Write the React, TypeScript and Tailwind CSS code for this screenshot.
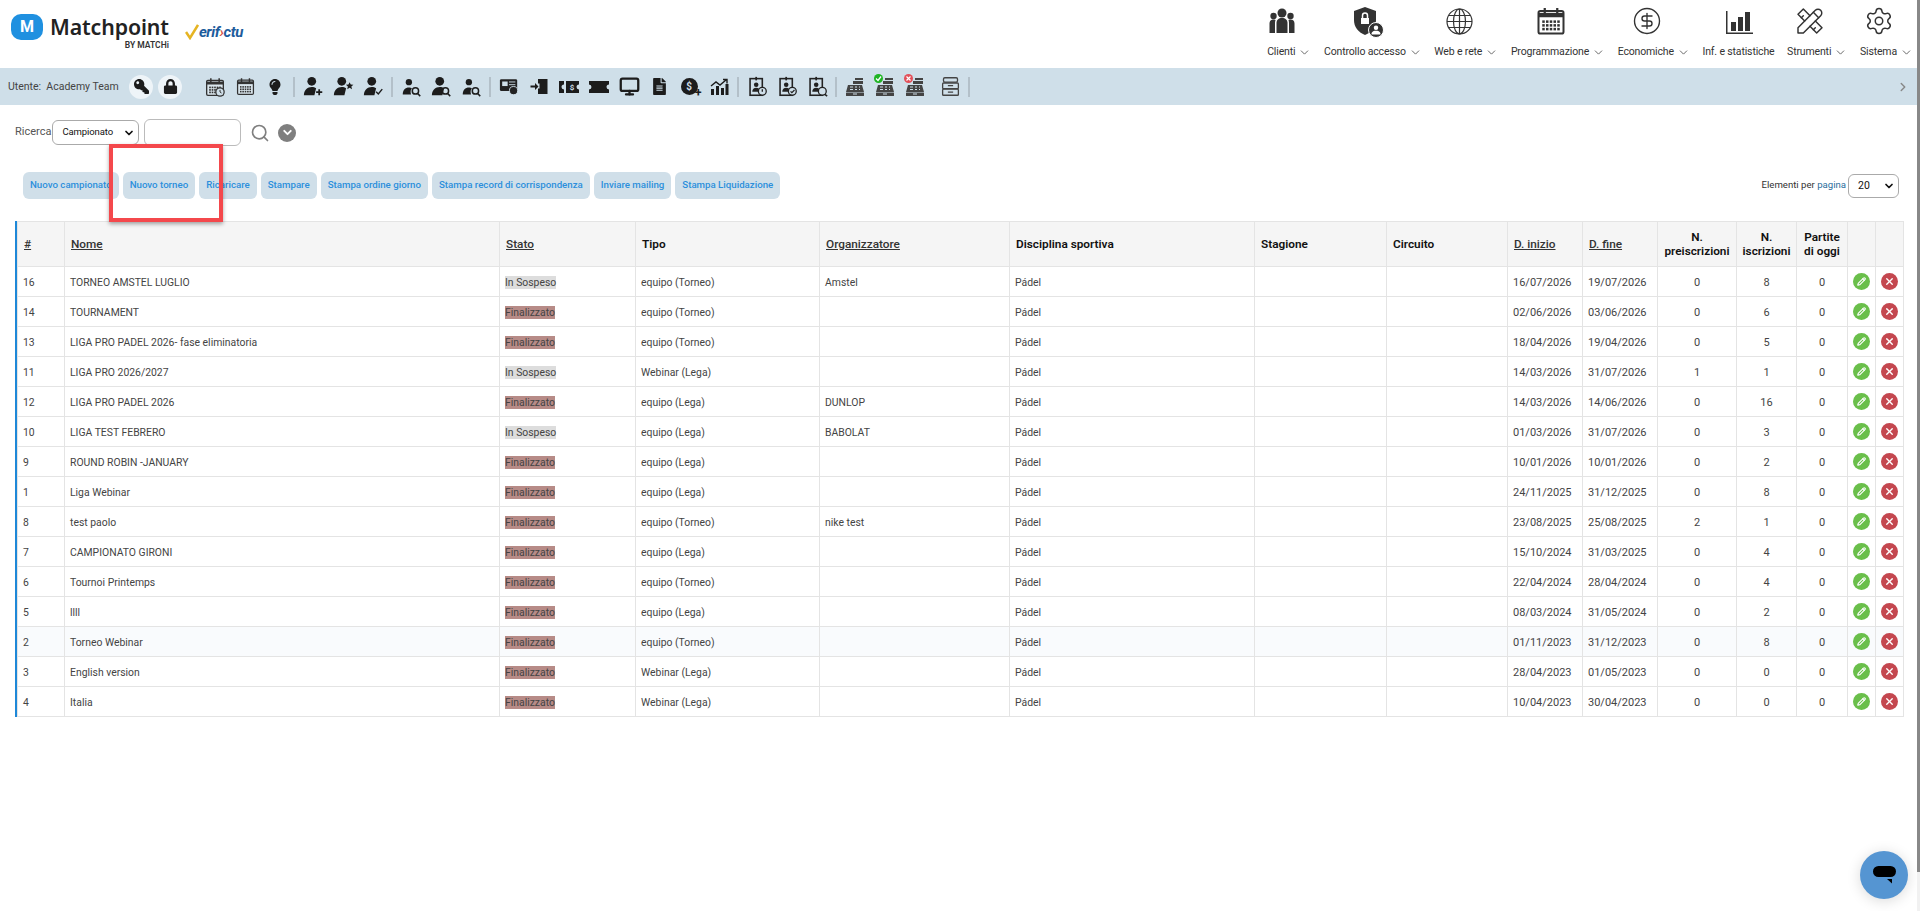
import { ChevronDown, ChevronRight, CircleDollarSign, Search, Settings, Pencil, X, Monitor } from "lucide-react";
import { FaFileAlt, FaKey, FaLightbulb, FaLock } from "react-icons/fa";
import { BsPersonFill } from "react-icons/bs";
import { TbTools } from "react-icons/tb";

const rows = [
  ["16", "TORNEO AMSTEL LUGLIO", "In Sospeso", "equipo (Torneo)", "Amstel", "16/07/2026", "19/07/2026", "0", "8"],
  ["14", "TOURNAMENT", "Finalizzato", "equipo (Torneo)", "", "02/06/2026", "03/06/2026", "0", "6"],
  ["13", "LIGA PRO PADEL 2026- fase eliminatoria", "Finalizzato", "equipo (Torneo)", "", "18/04/2026", "19/04/2026", "0", "5"],
  ["11", "LIGA PRO 2026/2027", "In Sospeso", "Webinar (Lega)", "", "14/03/2026", "31/07/2026", "1", "1"],
  ["12", "LIGA PRO PADEL 2026", "Finalizzato", "equipo (Lega)", "DUNLOP", "14/03/2026", "14/06/2026", "0", "16"],
  ["10", "LIGA TEST FEBRERO", "In Sospeso", "equipo (Lega)", "BABOLAT", "01/03/2026", "31/07/2026", "0", "3"],
  ["9", "ROUND ROBIN -JANUARY", "Finalizzato", "equipo (Lega)", "", "10/01/2026", "10/01/2026", "0", "2"],
  ["1", "Liga Webinar", "Finalizzato", "equipo (Lega)", "", "24/11/2025", "31/12/2025", "0", "8"],
  ["8", "test paolo", "Finalizzato", "equipo (Torneo)", "nike test", "23/08/2025", "25/08/2025", "2", "1"],
  ["7", "CAMPIONATO GIRONI", "Finalizzato", "equipo (Lega)", "", "15/10/2024", "31/03/2025", "0", "4"],
  ["6", "Tournoi Printemps", "Finalizzato", "equipo (Torneo)", "", "22/04/2024", "28/04/2024", "0", "4"],
  ["5", "llll", "Finalizzato", "equipo (Lega)", "", "08/03/2024", "31/05/2024", "0", "2"],
  ["2", "Torneo Webinar", "Finalizzato", "equipo (Torneo)", "", "01/11/2023", "31/12/2023", "0", "8"],
  ["3", "English version", "Finalizzato", "Webinar (Lega)", "", "28/04/2023", "01/05/2023", "0", "0"],
  ["4", "Italia", "Finalizzato", "Webinar (Lega)", "", "10/04/2023", "30/04/2023", "0", "0"],
];

const buttons = [
  "Nuovo campionato",
  "Nuovo torneo",
  "Ricaricare",
  "Stampare",
  "Stampa ordine giorno",
  "Stampa record di corrispondenza",
  "Inviare mailing",
  "Stampa Liquidazione",
];

const colWidths = [47, 435, 136, 184, 190, 245, 132, 121, 75, 75, 79, 60, 51, 28, 28];

function CalendarIcon({ size = 20, clock = false }: { size?: number; clock?: boolean }) {
  return (
    <svg width={size} height={size} viewBox="0 0 24 24" fill="none">
      <rect x="2" y="4" width="20" height="18" rx="1.500" stroke="#333" strokeWidth="1.600" fill="#fff" fillOpacity="0.25" />
      <path d="M2 5.500h20V9H2z" fill="#333" />
      <path d="M7 1.500v5M17 1.500v5" stroke="#333" strokeWidth="1.800" />
      {[11.5, 14.5, 17.5].map((y) =>
        [5, 8, 11, 14, 17].map((x) => <rect key={`${x}-${y}`} x={x} y={y} width="2" height="2" fill="#333" />),
      )}
      {clock && (
        <g>
          <circle cx="18" cy="18" r="5" fill="#cfdfe9" stroke="#333" strokeWidth="1.500" />
          <path d="M18 15.500V18l1.800 1.200" stroke="#333" strokeWidth="1.200" />
        </g>
      )}
    </svg>
  );
}

function PersonIcon({ badge, small = false }: { badge: "plus" | "star" | "check" | "search"; small?: boolean }) {
  return (
    <svg width="21" height="21" viewBox="0 0 24 24" fill="#1c1c1c">
      {small ? (
        <g>
          <circle cx="9" cy="7" r="3.600" />
          <path d="M2 21c0-5 3-8 7-8 1.500 0 2.500.3 3.500 1-1.500 1.500-2 4-1 7z" />
        </g>
      ) : (
        <g>
          <circle cx="10" cy="6" r="5" />
          <path d="M1 22c0-6 4-9.500 9-9.500 2 0 3.500.5 5 1.500L13 22z" />
        </g>
      )}
      {badge === "plus" && <path d="M18.500 15v7M15 18.500h7" stroke="#1c1c1c" strokeWidth="2" />}
      {badge === "star" && <path d="m19 7 1.300 2.800 3 .3-2.300 2 .7 3-2.700-1.600-2.700 1.600.7-3-2.300-2 3-.3z" />}
      {badge === "check" && <path d="m15 18 2.500 2.500L22 15" stroke="#1c1c1c" strokeWidth="1.600" fill="none" />}
      {badge === "search" && (
        <g fill="none" stroke="#1c1c1c" strokeWidth="1.700">
          <circle cx="16.500" cy="17" r="3.600" />
          <path d="m19 20 3 3" />
        </g>
      )}
    </svg>
  );
}

function BadgeDocIcon({ kind }: { kind: "clock" | "check" | "search" }) {
  return (
    <svg width="21" height="21" viewBox="0 0 24 24" fill="none">
      <rect x="3.500" y="3" width="14" height="19" stroke="#222" strokeWidth="1.800" />
      <path d="M10.500 1v4" stroke="#222" strokeWidth="2" />
      <circle cx="10.500" cy="10" r="2.600" fill="#222" />
      <path d="M6 18c0-3 2-4.500 4.500-4.500S15 15 15 18z" fill="#222" />
      <circle cx="17.500" cy="17.500" r="4.500" fill="#cfdfe9" stroke="#222" strokeWidth="1.500" />
      {kind === "clock" && <path d="M17.500 15v3" stroke="#222" strokeWidth="1.500" />}
      {kind === "check" && <path d="m15.500 17.500 1.500 1.500 3-3" stroke="#222" strokeWidth="1.400" />}
      {kind === "search" && <path d="m20.500 21 2.500 2" stroke="#222" strokeWidth="1.800" />}
    </svg>
  );
}

function DrawerIcon() {
  return (
    <svg width="21" height="21" viewBox="0 0 24 24" fill="none" stroke="#444" strokeWidth="1.500">
      <rect x="4" y="2" width="16" height="5" rx="1.500" />
      <rect x="3" y="8" width="18" height="6.500" rx="1" />
      <rect x="3" y="15" width="18" height="7" rx="1" />
      <path d="M9 11h6M9 18.500h6" />
    </svg>
  );
}

function Register({ status }: { status?: "ok" | "ko" }) {
  return (
    <span className="relative flex">
      <svg width="20" height="20" viewBox="0 0 20 20" fill="#444">
        <rect x="10" y="1" width="8" height="2" />
        <rect x="8" y="4" width="10" height="3" />
        <path d="M3 8h14l2 7H1z" />
        <path d="M5 10h3M10 10h2M14 10h1M5 12.500h3M10 12.500h2M14 12.500h1" stroke="#cfdfe9" />
        <rect x="1" y="15.500" width="18" height="3.500" rx="0.500" />
        <rect x="8" y="16.500" width="4" height="1" fill="#cfdfe9" />
      </svg>
      {status === "ok" && (
        <span className="absolute -left-[1px] -top-[3px] flex h-[9px] w-[9px] items-center justify-center rounded-full bg-[#1fb424]">
          <svg width="7" height="7" viewBox="0 0 7 7" fill="none">
            <path d="m1 3.500 2 2 3-4" stroke="#fff" strokeWidth="1.300" />
          </svg>
        </span>
      )}
      {status === "ko" && (
        <span className="absolute -left-[1px] -top-[3px] flex h-[9px] w-[9px] items-center justify-center rounded-full bg-[#e2505a]">
          <svg width="7" height="7" viewBox="0 0 7 7" fill="none">
            <path d="m1.500 1.500 4 4m0-4-4 4" stroke="#fff" strokeWidth="1.200" />
          </svg>
        </span>
      )}
    </span>
  );
}

function Sep() {
  return <span className="mx-[3px] h-[20px] w-[2px] bg-[#b3c0c9]" />;
}

function Slot({ children }: { children: React.ReactNode }) {
  return <span className="flex h-[24px] w-[30px] items-center justify-center">{children}</span>;
}

function NavItem({ label, icon, arrow = true }: { label: string; icon: React.ReactNode; arrow?: boolean }) {
  return (
    <div className="flex flex-col items-center">
      <div className={`flex h-[36px] items-center justify-center ${arrow ? "pr-[14px]" : ""}`}>{icon}</div>
      <div className="mt-[6px] flex items-center gap-[3px] text-[10.500px] leading-[14px] tracking-[-0.15px] text-[#333]">
        {label}
        {arrow && <ChevronDown size={13} strokeWidth={1.800} color="#666" />}
      </div>
    </div>
  );
}

function Logo() {
  return (
    <div className="flex items-start pl-[11px] pt-[14px]">
      <div className="flex h-[26px] w-[32px] items-center justify-center rounded-[10px] bg-[#1f90e0] text-[16px] font-bold text-white">M</div>
      <div className="ml-[7px] flex flex-col items-end">
        <span className="text-[21.300px] font-semibold leading-[26px] tracking-[-0.1px] text-[#222] [font-family:'Noto_Sans',sans-serif]">Matchpoint</span>
        <span className="text-[8.500px] font-semibold leading-[10px] text-[#333]">BY MATCHi</span>
      </div>
      <div className="ml-[16px] mt-[10px] flex items-center text-[15px] font-bold italic leading-[16px] tracking-[-0.4px] text-[#1d5c9c]">
        <svg width="14" height="16" viewBox="0 0 14 16" fill="none">
          <path d="M1 8l4 6 8-13" stroke="#e6b422" strokeWidth="2.500" />
        </svg>
        erif
        <span className="text-[#d9503f]">›</span>
        ctu
      </div>
    </div>
  );
}

function Th({ children, link = false, center = false }: { children?: React.ReactNode; link?: boolean; center?: boolean }) {
  return (
    <th className={`border border-[#e4e4e4] bg-[#f5f5f5] text-[11.800px] leading-[14px] ${center ? "px-[1px] text-center" : "px-[6px] text-left"} ${link ? "font-medium text-[#333] underline" : "font-semibold text-[#111]"}`}>
      {children}
    </th>
  );
}

function Td({ children, center = false, digits = false }: { children?: React.ReactNode; center?: boolean; digits?: boolean }) {
  return (
    <td className={`h-[30px] overflow-hidden whitespace-nowrap border border-[#e4e4e4] px-[5px] pt-[3px] text-[#444] ${digits ? "text-[11px]" : "text-[10.400px]"} ${center ? "text-center" : ""}`}>
      {children}
    </td>
  );
}

export default function App() {
  return (
    <div className="relative h-[911px] overflow-hidden bg-white [font-family:Roboto,sans-serif]">
      <header className="flex h-[68px] justify-between">
        <Logo />
        <nav className="flex items-start gap-[12.600px] pr-[7px] pt-[3px]">
          <NavItem
            label="Clienti"
            icon={
              <svg width="28" height="28" viewBox="0 0 28 28" fill="#333">
                <circle cx="14" cy="6" r="4.500" />
                <circle cx="5.500" cy="9" r="3.200" />
                <circle cx="22.500" cy="9" r="3.200" />
                <path d="M8.500 26V16c0-3 2-5 5.500-5s5.500 2 5.500 5v10z" />
                <path d="M7 26H1.500v-9.500c0-2.500 1.500-4 4-4 .8 0 1.500.1 2 .4C7.200 14 7 15 7 16zM21 26h5.500v-9.500c0-2.500-1.500-4-4-4-.8 0-1.500.1-2 .4.300 1.100.5 2.100.5 3.100z" />
              </svg>
            }
          />
          <NavItem
            label="Controllo accesso"
            icon={
              <span className="relative flex">
                <svg width="26" height="30" viewBox="0 0 26 30" fill="#333">
                  <path d="M12 1 23 5v9c0 7-4 12-11 15C5 26 1 21 1 14V5z" />
                  <rect x="8" y="12" width="8" height="6" fill="#fff" />
                  <path d="M9.500 12V9.500a2.500 2.500 0 0 1 5 0V12" stroke="#fff" strokeWidth="1.500" fill="none" />
                </svg>
                <span className="absolute -bottom-[2px] -right-[5px] flex h-[16px] w-[16px] items-center justify-center rounded-full border border-white bg-[#333]">
                  <BsPersonFill size={12} color="#fff" />
                </span>
              </span>
            }
          />
          <NavItem
            label="Web e rete"
            icon={
              <svg width="27" height="27" viewBox="0 0 27 27" fill="none" stroke="#333" strokeWidth="1.200">
                <circle cx="13.500" cy="13.500" r="12.500" />
                <ellipse cx="13.500" cy="13.500" rx="6" ry="12.500" />
                <path d="M13.500 1v25M1 13.500h25M3 7.500h21M3 19.500h21" />
              </svg>
            }
          />
          <NavItem label="Programmazione" icon={<CalendarIcon size={30} />} />
          <NavItem label="Economiche" icon={<CircleDollarSign size={30} strokeWidth={1.100} color="#333" />} />
          <NavItem
            label="Inf. e statistiche"
            arrow={false}
            icon={
              <svg width="28" height="28" viewBox="0 0 28 28" fill="#333">
                <path d="M1 4v23h27v-1.500H2.500V4z" />
                <rect x="6" y="15" width="5" height="9" />
                <rect x="13" y="10" width="5" height="14" />
                <rect x="20" y="5" width="5" height="19" />
              </svg>
            }
          />
          <NavItem label="Strumenti" icon={<TbTools size={32} strokeWidth={1.100} color="#333" />} />
          <NavItem label="Sistema" icon={<Settings size={30} strokeWidth={1.200} color="#333" />} />
        </nav>
      </header>

      <div className="flex h-[37px] items-center bg-[#cfdfe9] pl-[8px] pr-[10px]">
        <span className="w-[121px] whitespace-nowrap text-[10.500px] text-[#444]">
          Utente:&nbsp; Academy Team
        </span>
        <span className="flex h-[24px] w-[24px] items-center justify-center rounded-full bg-[#eef4f8]">
          <FaKey size={15} color="#1c1c1c" className="-scale-x-100" />
        </span>
        <span className="ml-[5px] flex h-[24px] w-[24px] items-center justify-center rounded-full bg-[#eef4f8]">
          <FaLock size={15} color="#1c1c1c" />
        </span>
        <span className="ml-[18px] flex items-center">
          <Slot><CalendarIcon clock /></Slot>
          <Slot><CalendarIcon size={19} /></Slot>
          <Slot><FaLightbulb size={16} color="#1c1c1c" /></Slot>
          <Sep />
          <Slot><PersonIcon badge="plus" /></Slot>
          <Slot><PersonIcon badge="star" /></Slot>
          <Slot><PersonIcon badge="check" /></Slot>
          <Sep />
          <Slot><PersonIcon badge="search" small /></Slot>
          <Slot><PersonIcon badge="search" /></Slot>
          <Slot><PersonIcon badge="search" small /></Slot>
          <Sep />
          <Slot>
            <svg width="20" height="19" viewBox="0 0 22 20" fill="#222">
              <rect x="1" y="2" width="19" height="13" rx="1.500" />
              <rect x="3.500" y="4.500" width="6" height="5" fill="#cfdfe9" />
              <path d="M11 5h7M11 8h7" stroke="#cfdfe9" />
              <circle cx="16" cy="14.500" r="4.500" stroke="#cfdfe9" />
            </svg>
          </Slot>
          <Slot>
            <svg width="19" height="19" viewBox="0 0 19 19" fill="#1c1c1c">
              <path d="M8 2h9.500v15H8v-5.500h1.500V9.500v-3H8z" />
              <path d="M0.500 8.500h4.500V6l3.500 3.500L5 13v-2.500H.5z" />
            </svg>
          </Slot>
          <Slot>
            <svg width="20" height="14" viewBox="0 0 20 14" fill="#1c1c1c">
              <path d="M0 1h5v3.500a2.500 2.500 0 0 0 0 5V13H0zM7 1h13v3.500a2.500 2.500 0 0 0 0 5V13H7z" />
              <text x="13" y="10" fontSize="8" fontWeight="700" fill="#cfdfe9" textAnchor="middle">$</text>
            </svg>
          </Slot>
          <Slot>
            <svg width="20" height="14" viewBox="0 0 20 14" fill="#1c1c1c">
              <path d="M0 1h20v3.500a2.500 2.500 0 0 0 0 5V13H0v-3.500a2.500 2.500 0 0 0 0-5z" />
            </svg>
          </Slot>
          <Slot><Monitor size={21} strokeWidth={2.600} color="#1c1c1c" /></Slot>
          <Slot><FaFileAlt size={17} color="#1c1c1c" /></Slot>
          <Slot>
            <span className="relative flex h-[17px] w-[17px] items-center justify-center rounded-full bg-[#1c1c1c] text-[10px] font-bold text-[#cfdfe9]">
              $
              <span className="absolute -bottom-[3px] -right-[4px] text-[12px] font-bold leading-[10px] text-[#1c1c1c]">+</span>
            </span>
          </Slot>
          <Slot>
            <svg width="19" height="17" viewBox="0 0 19 17" fill="#1c1c1c">
              <rect x="1" y="11" width="3" height="6" />
              <rect x="6" y="8" width="3" height="9" />
              <rect x="11" y="10" width="3" height="7" />
              <rect x="15.500" y="6" width="3" height="11" />
              <path d="M1 8l5-4 4 3 6-5M13 1.500h4v4" stroke="#1c1c1c" strokeWidth="1.400" fill="none" />
            </svg>
          </Slot>
          <Sep />
          <Slot><BadgeDocIcon kind="clock" /></Slot>
          <Slot><BadgeDocIcon kind="check" /></Slot>
          <Slot><BadgeDocIcon kind="search" /></Slot>
          <Sep />
          <Slot><Register /></Slot>
          <Slot><Register status="ok" /></Slot>
          <Slot><Register status="ko" /></Slot>
          <span className="ml-[5px] flex w-[30px] justify-center"><DrawerIcon /></span>
          <Sep />
        </span>
        <ChevronRight size={14} strokeWidth={2.500} color="#888" className="ml-auto" />
      </div>

      <div className="mt-[14px] flex h-[27px] items-center pl-[15px]">
        <span className="text-[11px] text-[#555]">Ricerca</span>
        <div className="ml-[1px] flex h-[25px] w-[87px] items-center justify-between rounded-[6px] border border-[#aaa] pl-[9px] pr-[3px] text-[9.500px] tracking-[-0.1px] text-[#111]">
          Campionato
          <ChevronDown size={12} strokeWidth={3.500} color="#111" />
        </div>
        <div className="ml-[5px] h-[27px] w-[97px] rounded-[6px] border border-[#bbb]" />
        <Search size={20} strokeWidth={2} color="#7f7f7f" className="ml-[9px]" />
        <span className="ml-[8px] flex h-[18px] w-[18px] items-center justify-center rounded-full bg-[#7f7f7f]">
          <ChevronDown size={13} strokeWidth={3.500} color="#fff" />
        </span>
      </div>

      <div className="mt-[26px] flex h-[27px] items-center justify-between pl-[23px] pr-[21px]">
        <div className="flex gap-[4px]">
          {buttons.map((b) => (
            <span key={b} className="flex h-[27px] items-center rounded-[6px] bg-[#d0dfe9] px-[7px] text-[9.700px] font-medium text-[#2c8fdc]">
              {b}
            </span>
          ))}
        </div>
        <div className="flex items-center gap-[2px]">
          <span className="text-[9.600px] text-[#333]">
            Elementi per <span className="text-[#2a6d9c]">pagina</span>
          </span>
          <div className="flex h-[24px] w-[51px] items-center justify-between rounded-[6px] border border-[#aaa] pl-[9px] pr-[3px] text-[10.500px] text-[#111]">
            20
            <ChevronDown size={12} strokeWidth={3.500} color="#111" />
          </div>
        </div>
      </div>

      <div className="ml-[15px] mt-[22px] w-[1888px] border-l-[2px] border-[#1e88d8]">
        <table className="table-fixed border-collapse" style={{ width: colWidths.reduce((a, b) => a + b, 0) }}>
          <colgroup>
            {colWidths.map((w, i) => (
              <col key={i} style={{ width: w }} />
            ))}
          </colgroup>
          <thead>
            <tr className="h-[45px]">
              <Th link>#</Th>
              <Th link>Nome</Th>
              <Th link>Stato</Th>
              <Th>Tipo</Th>
              <Th link>Organizzatore</Th>
              <Th>Disciplina sportiva</Th>
              <Th>Stagione</Th>
              <Th>Circuito</Th>
              <Th link>D. inizio</Th>
              <Th link>D. fine</Th>
              <Th center>N. preiscrizioni</Th>
              <Th center>N. iscrizioni</Th>
              <Th center>Partite di oggi</Th>
              <Th />
              <Th />
            </tr>
          </thead>
          <tbody>
            {rows.map((r) => (
              <tr key={r[0]} className={r[0] === "2" ? "bg-[#f9fbfd]" : ""}>
                <Td>{r[0]}</Td>
                <Td>{r[1]}</Td>
                <Td>
                  <span className={r[2] === "Finalizzato" ? "bg-[#b78b87]" : "bg-[#dddddd]"}>{r[2]}</span>
                </Td>
                <Td>{r[3]}</Td>
                <Td>{r[4]}</Td>
                <Td>Pádel</Td>
                <Td />
                <Td />
                <Td digits>{r[5]}</Td>
                <Td digits>{r[6]}</Td>
                <Td center digits>{r[7]}</Td>
                <Td center digits>{r[8]}</Td>
                <Td center digits>0</Td>
                <td className="border border-[#e4e4e4]">
                  <span className="mx-auto flex h-[17px] w-[17px] items-center justify-center rounded-full bg-[#6abf4b]">
                    <Pencil size={9} strokeWidth={3} color="#fff" />
                  </span>
                </td>
                <td className="border border-[#e4e4e4]">
                  <span className="mx-auto flex h-[17px] w-[17px] items-center justify-center rounded-full bg-[#c4474f]">
                    <X size={11} strokeWidth={3} color="#fff" />
                  </span>
                </td>
              </tr>
            ))}
          </tbody>
        </table>
      </div>

      <div className="absolute left-[109px] top-[144px] h-[78px] w-[114px] border-[4px] border-[#f4484c] shadow-[0_2px_4px_rgba(0,0,0,0.35)]" />

      <div className="absolute bottom-[12px] right-[12px] flex h-[48px] w-[48px] items-center justify-center rounded-full bg-[#5595d2] shadow-[0_2px_14px_rgba(0,0,0,0.15)]">
        <svg width="24" height="20" viewBox="0 0 24 20" fill="#000">
          <rect x="1" y="1" width="23" height="11" rx="5.500" />
          <path d="M15 14l5 0v4.500z" />
        </svg>
      </div>

      <div className="absolute right-0 top-0 h-full w-[3px] bg-[#f1f1f1]">
        <div className="h-[872px] bg-[#888]" />
      </div>
    </div>
  );
}
